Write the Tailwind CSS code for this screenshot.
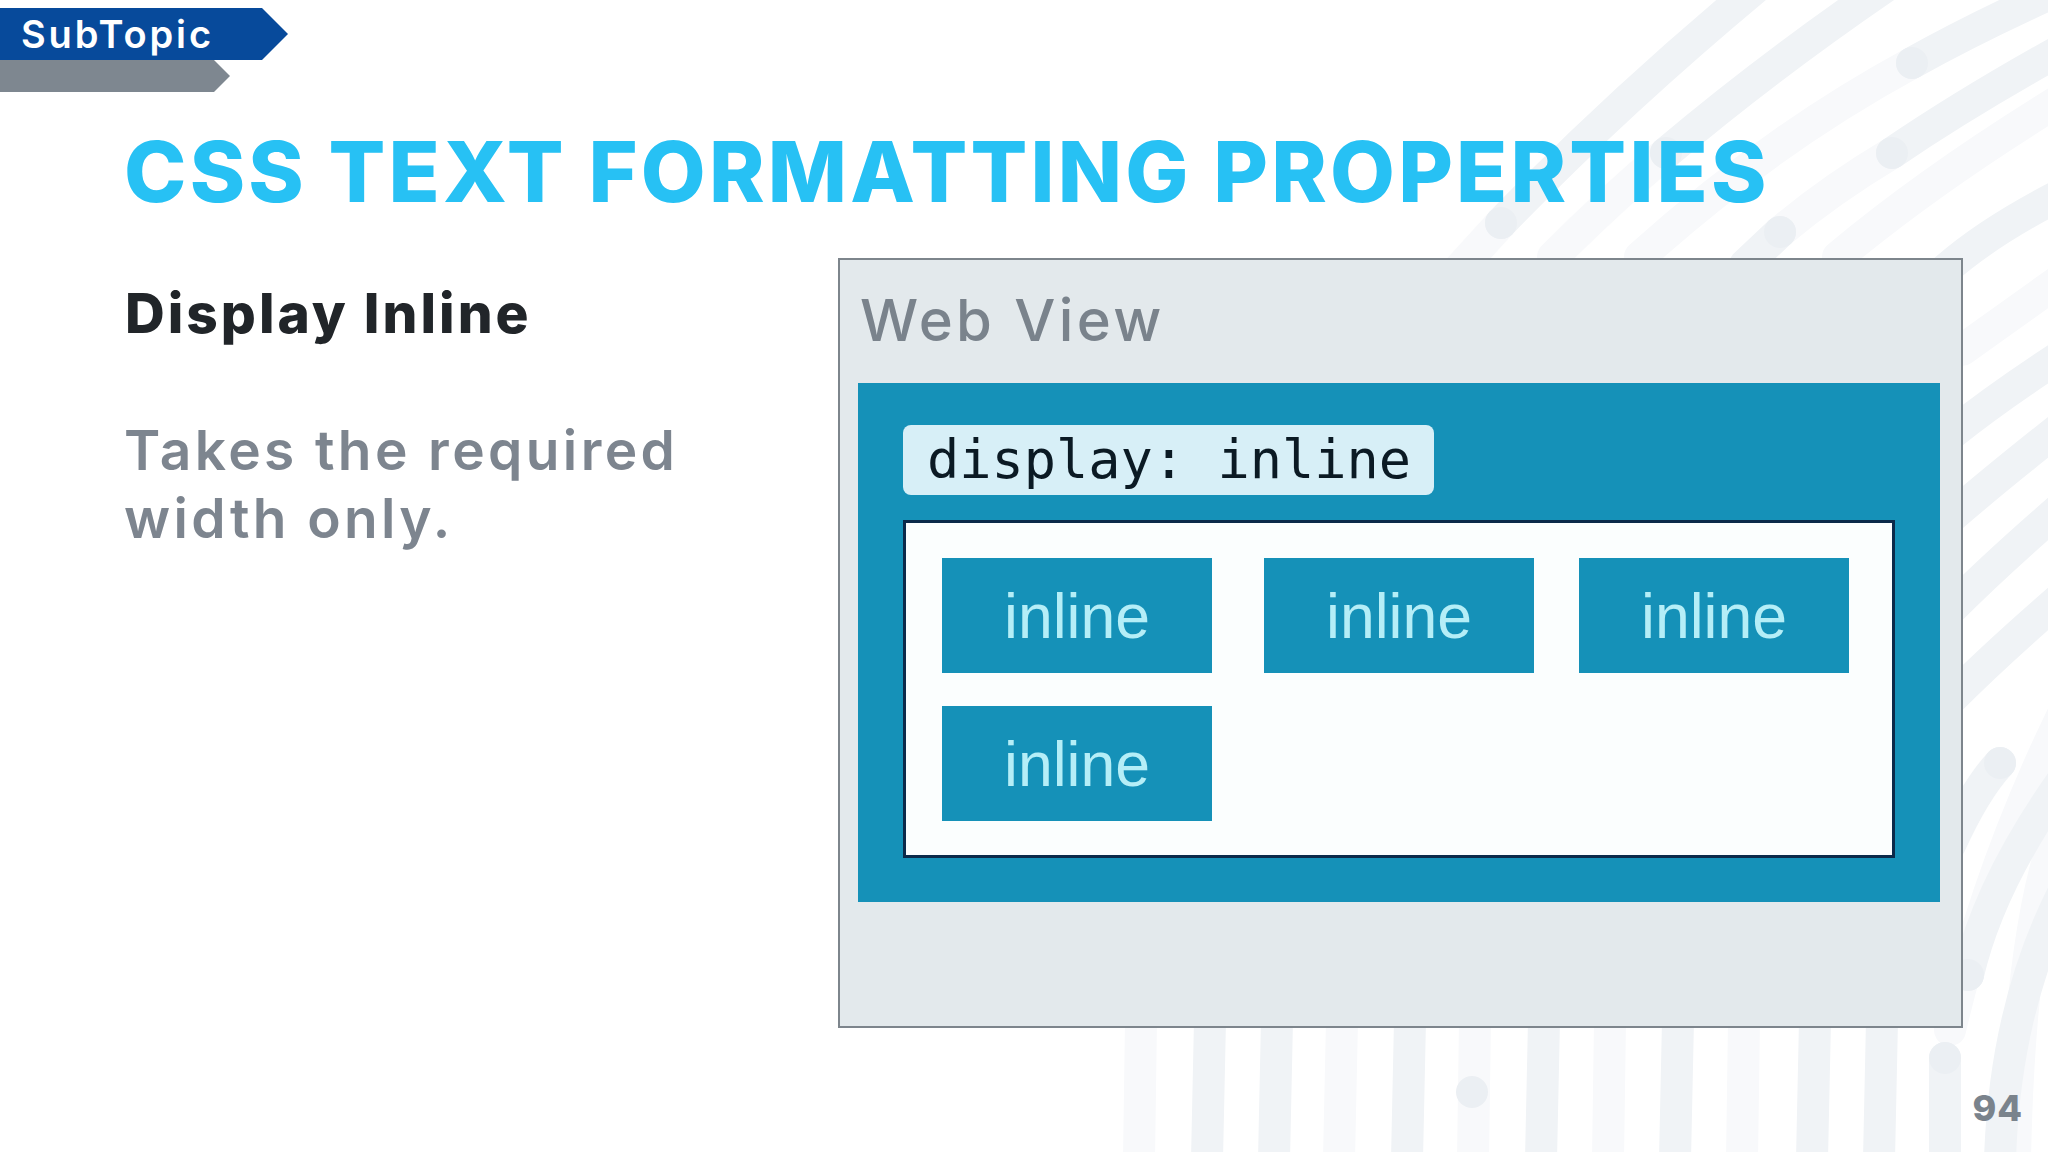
<!DOCTYPE html>
<html lang="en">
<head>
    <meta charset="UTF-8">
    <meta name="viewport" content="width=device-width, initial-scale=1.0">
    <title>CSS Text Formatting Properties</title>
    <script src="https://cdn.jsdelivr.net/npm/@tailwindcss/browser@4"></script>
</head>
<body class="bg-white">

    <div class="relative w-[2048px] h-[1152px] overflow-hidden font-['Inter',sans-serif]">

        <!-- fingerprint stripes behind the slide -->
        <svg class="absolute inset-0" width="2048" height="1152" viewBox="0 0 2048 1152" fill="none" stroke-width="32" stroke-linecap="round">
            <g stroke="#f8f9fb">
                <path d="M1440 290L1501 223"/>
                <path d="M1553 257Q1610 200 1666 153"/>
                <path d="M1640 257Q1770 140 1912 63"/>
                <path d="M1780 232Q1830 190 1892 153"/>
                <path d="M1838 257Q1930 180 2060 100"/>
                <path d="M1962 350L2060 280"/>
                <path d="M1950 1030Q1990 860 2070 700"/>
                <path d="M2015 1160Q2020 900 2070 800"/>
                <path d="M1139 1160L1141 1020"/>
                <path d="M1339 1160L1342 1020"/>
                <path d="M1473 1160L1475 1020"/>
                <path d="M1608 1160L1610 1020"/>
                <path d="M1742 1160L1744 1020"/>
            </g>
            <g stroke="#f0f3f6">
                <path d="M1501 223Q1620 100 1765 -20"/>
                <path d="M1666 153Q1770 65 1895 -20"/>
                <path d="M1912 63Q1980 25 2070 -15"/>
                <path d="M1745 265L1780 232"/>
                <path d="M1892 153Q1970 100 2070 45"/>
                <path d="M1945 270Q1990 230 2070 190"/>
                <path d="M1950 435Q2000 395 2070 350"/>
                <path d="M1950 518Q2000 475 2070 420"/>
                <path d="M1950 610Q2000 560 2070 500"/>
                <path d="M1950 700Q2000 650 2070 590"/>
                <path d="M2000 763Q1975 790 1950 845"/>
                <path d="M1968 975Q1990 880 2070 770"/>
                <path d="M2000 1160Q2005 1000 2070 880"/>
                <path d="M1207 1160L1210 1020"/>
                <path d="M1274 1160L1277 1020"/>
                <path d="M1407 1160L1410 1020"/>
                <path d="M1541 1160L1544 1020"/>
                <path d="M1675 1160L1678 1020"/>
                <path d="M1812 1160L1815 1020"/>
                <path d="M1879 1160L1882 1020"/>
                <path d="M1945 1160L1945 1058"/>
            </g>
            <g fill="#ebeff3">
                <circle cx="1501" cy="223" r="16"/>
                <circle cx="1666" cy="153" r="16"/>
                <circle cx="1912" cy="63" r="16"/>
                <circle cx="1892" cy="153" r="16"/>
                <circle cx="1780" cy="232" r="16"/>
                <circle cx="2000" cy="763" r="16"/>
                <circle cx="1968" cy="975" r="16"/>
                <circle cx="1945" cy="1058" r="16"/>
                <circle cx="1472" cy="1092" r="16"/>
            </g>
        </svg>

        <div class="relative flex flex-col">

            <!-- ribbons -->
            <div class="pt-2">
                <div class="flex items-center w-[288px] h-[52px] pl-[21px] bg-[#074a9b] text-white text-[38px] font-semibold tracking-[2.9px] [clip-path:polygon(0_0,262px_0,100%_50%,262px_100%,0_100%)]">SubTopic</div>
                <div class="w-[230px] h-[32px] bg-[#7e8790] [clip-path:polygon(0_0,214px_0,100%_50%,214px_100%,0_100%)]"></div>
            </div>

            <h1 class="mt-[30px] h-[100px] pl-[124px] text-[84px] leading-[100px] font-extrabold tracking-[3.2px] text-[#27c1f4] whitespace-nowrap">CSS TEXT FORMATTING PROPERTIES</h1>

            <div class="flex mt-[36px]">
                <div class="w-[838px] pl-[125px] pt-[20px]">
                    <h2 class="text-[55px] leading-[70px] font-extrabold tracking-[3px] text-[#212529]">Display Inline</h2>
                    <p class="mt-[68px] -ml-px text-[55px] leading-[68px] font-semibold tracking-[3.4px] text-[#7d858f]">Takes the required<br>width only.</p>
                </div>

                <!-- web view panel -->
                <div class="w-[1125px] h-[770px] border-2 border-[#7d858c] bg-[#e3e9ec]">
                    <div class="h-[123px] pl-[20px] pt-[20px] text-[58px] leading-[80px] font-medium tracking-[3.4px] text-[#7a838c]">Web View</div>
                    <div class="ml-[18px] w-[1082px] h-[519px] bg-[#1591b8] pl-[45px] pt-[42px]">
                        <div class="flex items-center w-[531px] h-[70px] pl-[24px] rounded-lg bg-[#d7eff7] font-['DejaVu_Sans_Mono',monospace] text-[53.6px] text-[#0b1a24]">display: inline</div>
                        <div class="mt-[25px] w-[992px] h-[338px] border-[3px] border-[#0b2a4a] bg-[#fbfefe] pl-[36px] pt-[35px] flex flex-col gap-[33px] font-['Liberation_Sans',sans-serif] text-[62.5px] text-[#b5eef7]">
                            <div class="flex">
                                <div class="flex items-center justify-center w-[270px] h-[115px] pt-[2px] bg-[#1591b8]">inline</div>
                                <div class="flex items-center justify-center w-[270px] h-[115px] ml-[52px] pt-[2px] bg-[#1591b8]">inline</div>
                                <div class="flex items-center justify-center w-[270px] h-[115px] ml-[45px] pt-[2px] bg-[#1591b8]">inline</div>
                            </div>
                            <div class="flex">
                                <div class="flex items-center justify-center w-[270px] h-[115px] pt-[2px] bg-[#1591b8]">inline</div>
                            </div>
                        </div>
                    </div>
                </div>
            </div>

            <div class="flex justify-end pr-[25px] mt-[58px] text-[36px] leading-[44px] font-extrabold tracking-[1px] text-[#7a838c]">94</div>
        </div>
    </div>

</body>
</html>
